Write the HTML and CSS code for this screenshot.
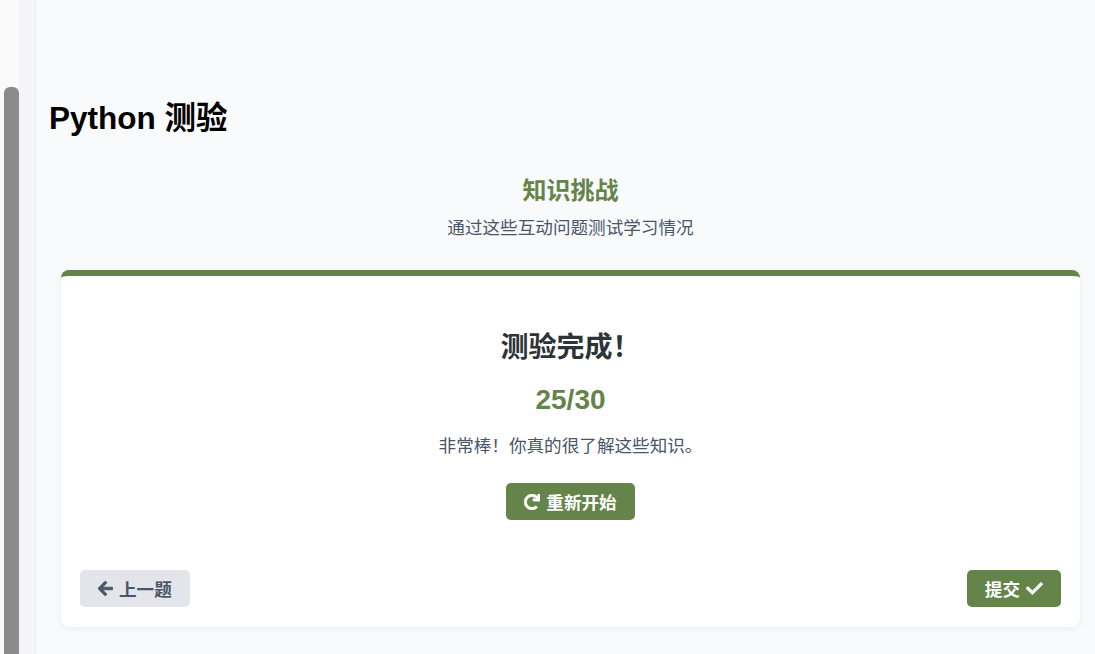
FILE: index.html
```html
<!DOCTYPE html>
<html lang="zh">
<head>
<meta charset="utf-8">
<title>Python 测验</title>
<link rel="stylesheet" href="styles.css">
</head>
<body>
<div class="page">
  <aside class="rail">
    <div class="track"><div class="thumb"></div></div>
    <div class="strip"></div>
  </aside>
  <main class="main">
    <h1 class="page-title">Python 测验</h1>
    <section class="quiz">
      <header class="quiz-head">
        <h3 class="quiz-title">知识挑战</h3>
        <p class="quiz-sub">通过这些互动问题测试学习情况</p>
      </header>
      <div class="card">
        <div class="result">
          <h2 class="result-title">测验完成！</h2>
          <div class="score">25/30</div>
          <p class="msg">非常棒！你真的很了解这些知识。</p>
          <button class="btn btn-primary restart">
            <svg class="ico" viewBox="0 0 512 512" width="16" height="16"><path fill="currentColor" d="M500.33 0h-47.41a12 12 0 0 0-12 12.57l4 82.76A247.42 247.42 0 0 0 256 8C119.34 8 7.9 119.53 8 256.19 8.1 393.07 119.1 504 256 504a247.1 247.1 0 0 0 166.18-63.91 12 12 0 0 0 .48-17.430l-34-34a12 12 0 0 0-16.38-.55A176 176 0 1 1 402.1 157.8l-101.53-4.87a12 12 0 0 0-12.57 12v47.41a12 12 0 0 0 12 12h200.33a12 12 0 0 0 12-12V12a12 12 0 0 0-12-12z" stroke="currentColor" stroke-width="28"/></svg>
            <span>重新开始</span>
          </button>
        </div>
        <div class="nav">
          <button class="btn btn-light">
            <svg class="ico" viewBox="0 0 448 512" width="15" height="17"><path fill="currentColor" stroke="currentColor" stroke-width="24" d="M257.5 445.1l-22.2 22.2c-9.4 9.4-24.6 9.4-33.9 0L7 273c-9.4-9.4-9.4-24.6 0-33.9L201.4 44.7c9.4-9.4 24.6-9.4 33.9 0l22.2 22.2c9.5 9.5 9.3 25-.4 34.3L136.6 216H424c13.3 0 24 10.7 24 24v32c0 13.3-10.7 24-24 24H136.6l120.5 114.8c9.8 9.3 10 24.8.4 34.3z"/></svg>
            <span>上一题</span>
          </button>
          <button class="btn btn-primary">
            <span>提交</span>
            <svg class="ico" viewBox="0 0 512 512" width="17" height="17"><path fill="currentColor" d="M173.898 439.404l-166.4-166.4c-9.997-9.997-9.997-26.206 0-36.204l36.203-36.204c9.997-9.998 26.207-9.998 36.204 0L192 312.69 432.095 72.596c9.997-9.997 26.207-9.997 36.204 0l36.203 36.204c9.997 9.997 9.997 26.206 0 36.204l-294.4 294.401c-9.998 9.997-26.207 9.997-36.204-.001z"/></svg>
          </button>
        </div>
      </div>
    </section>
  </main>
</div>
</body>
</html>
```

FILE: styles.css
```css
html, body {
  margin: 0;
  padding: 0;
  height: 100%;
}
body {
  font-family: "Liberation Sans", "Noto Sans CJK SC", sans-serif;
  background: #f9fafc;
  color: #2d3436;
  overflow: hidden;
}
.page {
  display: flex;
  height: 654px;
}
.rail {
  display: flex;
  width: 36px;
  flex: 0 0 36px;
}
.track {
  width: 19px;
  background: #fafafa;
  padding-top: 87px;
  display: flex;
  box-sizing: border-box;
}
.thumb {
  width: 11px;
  margin-left: 4px;
  background: #8b8b8b;
  border-radius: 6px 6px 0 0;
  flex: 1;
}
.strip {
  width: 16px;
  background: #f4f4fa;
  border-right: 1px solid #ececf3;
}
.main {
  flex: 1;
  padding: 0 15px 0 13px;
  min-width: 0;
}
.page-title {
  margin: 98px 0 0;
  font-size: 31.5px;
  line-height: 40px;
  font-weight: 700;
  color: #000;
}
.quiz {
  padding-left: 12px;
}
.quiz-head {
  text-align: center;
  margin-top: 38px;
}
.quiz-title {
  margin: 0;
  font-size: 24px;
  line-height: 30px;
  font-weight: 700;
  color: #658449;
}
.quiz-sub {
  margin: 10px 0 0;
  font-size: 17.6px;
  line-height: 24px;
  color: #4a5568;
}
.card {
  margin-top: 30px;
  background: #fff;
  border-top: 6px solid #658449;
  border-radius: 8px;
  padding: 20px 19px 20px 19px;
  box-shadow: 0 1px 6px rgba(0, 0, 0, 0.07);
}
.result {
  text-align: center;
  padding-top: 35px;
}
.result-title {
  margin: 0;
  font-size: 28px;
  line-height: 34px;
  font-weight: 700;
  color: #2d3436;
}
.score {
  margin-top: 18px;
  font-size: 28px;
  line-height: 34px;
  font-weight: 700;
  color: #658449;
}
.msg {
  margin: 17px 0 0;
  font-size: 17.6px;
  line-height: 24px;
  color: #4a5568;
}
.btn {
  display: inline-flex;
  align-items: center;
  gap: 6px;
  height: 37px;
  padding: 0 18px;
  border: 0;
  border-radius: 5px;
  font-family: inherit;
  font-size: 17.6px;
  font-weight: 700;
  cursor: pointer;
  box-sizing: border-box;
}
.btn-primary {
  background: #658449;
  color: #fff;
}
.btn-light {
  background: #e3e5ea;
  color: #4a5568;
}
.restart {
  margin-top: 25px;
}
.ico {
  display: block;
  flex: 0 0 auto;
}
.nav {
  display: flex;
  justify-content: space-between;
  margin-top: 50px;
}
```
